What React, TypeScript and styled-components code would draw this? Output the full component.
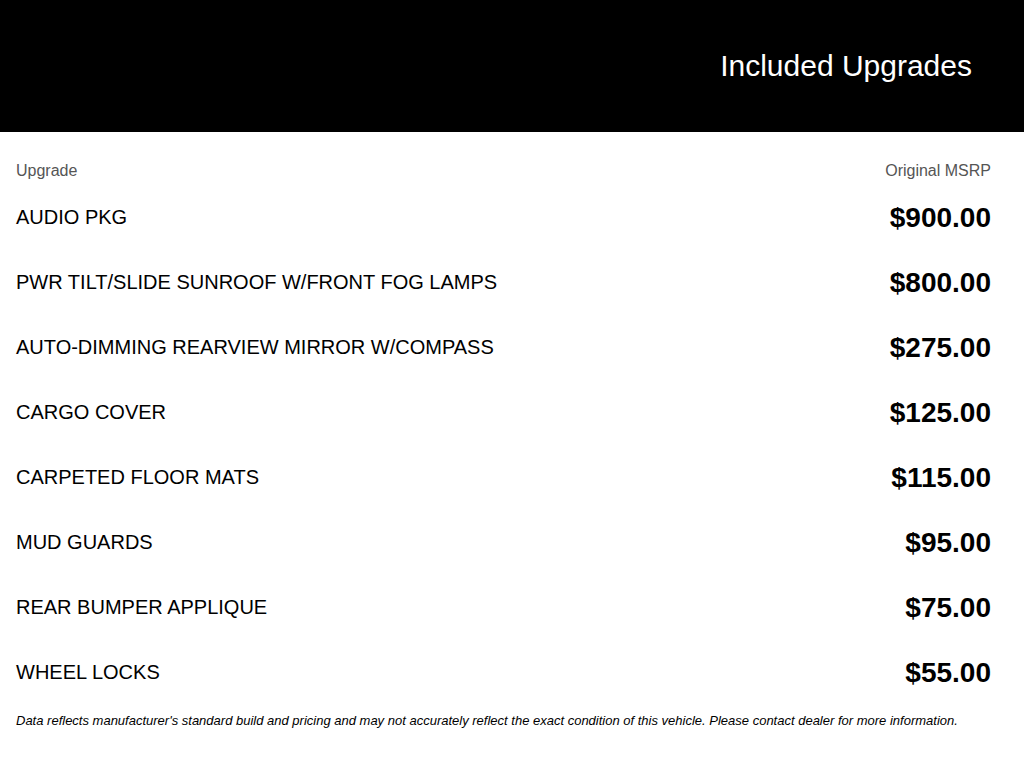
import styled, { createGlobalStyle } from "styled-components";

const GlobalStyle = createGlobalStyle`
  body {
    margin: 0;
    font-family: "Liberation Sans", Arial, sans-serif;
    background: #fff;
    color: #000;
  }
`;

const upgrades = [
  { name: "AUDIO PKG", price: "$900.00" },
  { name: "PWR TILT/SLIDE SUNROOF W/FRONT FOG LAMPS", price: "$800.00" },
  { name: "AUTO-DIMMING REARVIEW MIRROR W/COMPASS", price: "$275.00" },
  { name: "CARGO COVER", price: "$125.00" },
  { name: "CARPETED FLOOR MATS", price: "$115.00" },
  { name: "MUD GUARDS", price: "$95.00" },
  { name: "REAR BUMPER APPLIQUE", price: "$75.00" },
  { name: "WHEEL LOCKS", price: "$55.00" },
];

export default function App() {
  return (
    <>
      <GlobalStyle />
      <Header>
        <Title>Included Upgrades</Title>
      </Header>
      <Body>
        <HeadRow>
          <span>Upgrade</span>
          <span>Original MSRP</span>
        </HeadRow>
        {upgrades.map((u) => (
          <Row key={u.name}>
            <Name>{u.name}</Name>
            <Price>{u.price}</Price>
          </Row>
        ))}
        <Disclaimer>
          Data reflects manufacturer's standard build and pricing and may not
          accurately reflect the exact condition of this vehicle. Please contact
          dealer for more information.
        </Disclaimer>
      </Body>
    </>
  );
}

const Header = styled.header`
  height: 132px;
  background: #000;
  display: flex;
  align-items: center;
  justify-content: flex-end;
  padding: 0 52px;
  box-sizing: border-box;
`;

const Title = styled.h1`
  margin: 0;
  color: #fff;
  font-size: 30px;
  font-weight: 400;
`;

const Body = styled.main`
  padding: 25px 33px 0 16px;
`;

const HeadRow = styled.div`
  display: flex;
  justify-content: space-between;
  align-items: center;
  height: 28px;
  font-size: 16px;
  color: #555;
`;

const Row = styled.section`
  display: flex;
  justify-content: space-between;
  align-items: center;
  height: 65px;
`;

const Name = styled.span`
  font-size: 20px;
`;

const Price = styled.span`
  font-size: 28px;
  font-weight: 700;
`;

const Disclaimer = styled.p`
  margin: 8px 0 0;
  font-size: 13px;
  font-style: italic;
`;
